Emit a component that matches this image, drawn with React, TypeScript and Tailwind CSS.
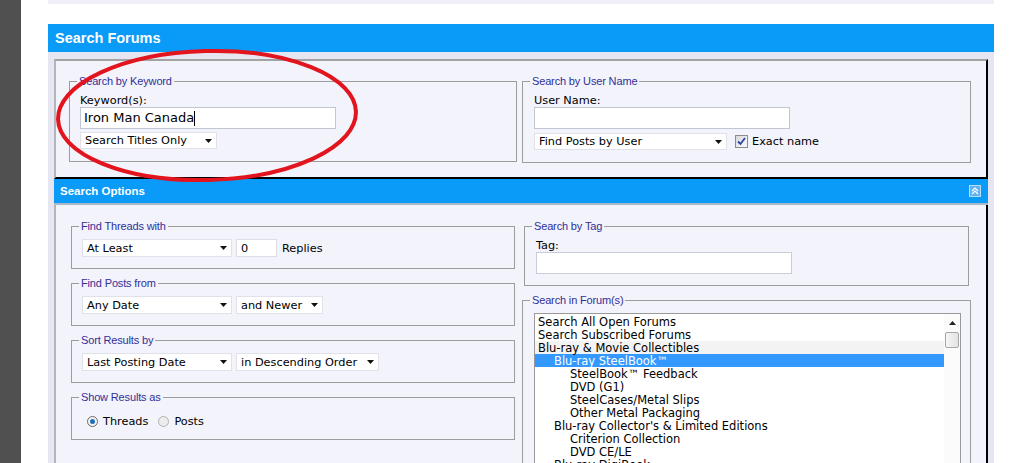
import React from "react";

const Arrow = () => (
  <svg width="7" height="4" viewBox="0 0 7 4" className="shrink-0">
    <path d="M0 0H7L3.5 4Z" fill="#111" />
  </svg>
);

function Select({ label, className }: { label: string; className: string }) {
  return (
    <div
      className={`flex items-center justify-between bg-white border border-[#e1e1ea] pl-[4px] pr-[4px] ${className}`}
    >
      <span className="whitespace-nowrap pt-[1px]">{label}</span>
      <Arrow />
    </div>
  );
}

function Fieldset({
  legend,
  className,
  children,
}: {
  legend: string;
  className: string;
  children: React.ReactNode;
}) {
  return (
    <fieldset className={`border border-[#9c9c9c] min-w-0 p-0 m-0 ${className}`}>
      <legend className="ml-[7px] px-[2px] text-[11px] leading-[14px] tracking-[-0.15px] text-[#30309a] font-['Liberation_Sans',Arial,sans-serif]">
        {legend}
      </legend>
      {children}
    </fieldset>
  );
}

const Radio = ({ checked }: { checked: boolean }) =>
  checked ? (
    <span className="w-[11px] h-[11px] rounded-full border border-[#6a6a6a] bg-[#f4f4f4] flex items-center justify-center shrink-0">
      <span className="w-[5px] h-[5px] rounded-full bg-[#1f6fb8]" />
    </span>
  ) : (
    <span className="w-[11px] h-[11px] rounded-full border border-[#b2b2b2] bg-[#ececec] shrink-0" />
  );

const forums: { t: string; l: number; sel?: boolean; grey?: boolean }[] = [
  { t: "Search All Open Forums", l: 0 },
  { t: "Search Subscribed Forums", l: 0 },
  { t: "Blu-ray & Movie Collectibles", l: 0, grey: true },
  { t: "Blu-ray SteelBook™", l: 1, sel: true },
  { t: "SteelBook™ Feedback", l: 2 },
  { t: "DVD (G1)", l: 2 },
  { t: "SteelCases/Metal Slips", l: 2 },
  { t: "Other Metal Packaging", l: 2 },
  { t: "Blu-ray Collector's & Limited Editions", l: 1 },
  { t: "Criterion Collection", l: 2 },
  { t: "DVD CE/LE", l: 2 },
  { t: "Blu-ray DigiBook", l: 1 },
  { t: "Blu-ray Digipaks", l: 1 },
];

export default function App() {
  return (
    <div className="relative w-[1030px] h-[463px] overflow-hidden bg-white flex items-start font-['DejaVu_Sans',Verdana,sans-serif] text-[11.3px] leading-[14px] text-black">
      <div className="w-[21px] h-[463px] shrink-0 bg-[#505050]" />
      <div className="ml-[27px] w-[946px] shrink-0">
        <div className="h-[4px] bg-[#efeff7]" />
        <div className="h-[20px]" />
        <div className="h-[28px] bg-[#0a9af7] pl-[7px] flex items-center text-white font-bold text-[14.5px] font-['Liberation_Sans',Arial,sans-serif]">
          Search Forums
        </div>
        <div className="bg-[#e6e6f2] pt-[7px] pl-[6px] pr-[6px]">
          {/* Box 1 */}
          <div className="h-[120px] bg-[#f3f3fb] border-t-2 border-t-[#a2a2a2] border-l-2 border-l-[#b4b4bc] border-r-2 border-r-black border-b-2 border-b-black pt-[13px] pl-[13px] pr-[15px] flex items-start gap-[5px]">
            <Fieldset legend="Search by Keyword" className="w-[448px] h-[88px]">
              <div className="pl-[10px] pt-[6px]">
                <div className="leading-[13px]">Keyword(s):</div>
                <div className="w-[256px] h-[22px] bg-white border border-[#c0c6d2] pl-[3px] flex items-center text-[13px]">
                  <span>Iron Man Canada</span>
                  <span className="w-[1px] h-[15px] bg-black" />
                </div>
                <Select label="Search Titles Only" className="mt-[3px] w-[137px] h-[17px]" />
              </div>
            </Fieldset>
            <Fieldset legend="Search by User Name" className="flex-1 h-[89px]">
              <div className="pl-[11px] pt-[6px]">
                <div className="leading-[13px]">User Name:</div>
                <div className="w-[256px] h-[22px] bg-white border border-[#c0c6d2]" />
                <div className="mt-[4px] flex items-center h-[17px]">
                  <Select label="Find Posts by User" className="w-[193px] h-[17px]" />
                  <span className="ml-[8px] w-[13px] h-[13px] border border-[#8c8c8c] bg-gradient-to-br from-[#d8d8d8] to-[#fafafa] flex items-center justify-center">
                    <svg width="9" height="9" viewBox="0 0 9 9">
                      <path d="M1 4.5L3.5 7L8 1" stroke="#2a45a8" strokeWidth="1.8" fill="none" />
                    </svg>
                  </span>
                  <span className="ml-[4px] pt-[1px]">Exact name</span>
                </div>
              </div>
            </Fieldset>
          </div>

          {/* Box 2 */}
          <div className="h-[24px] bg-[#0a9af7] border-b-2 border-b-[#aab7c6] box-content flex items-center justify-between pl-[6px] pr-[7px]">
            <span className="text-white font-bold text-[11.5px] font-['Liberation_Sans',Arial,sans-serif]">
              Search Options
            </span>
            <span className="w-[12px] h-[12px] bg-[#5fb3f2] border border-[#b9defa] flex items-center justify-center">
              <svg width="10" height="10" viewBox="0 0 10 10">
                <path d="M2 5L5 2L8 5M2 8L5 5L8 8" stroke="#fff" strokeWidth="1.2" fill="none" />
              </svg>
            </span>
          </div>
          <div className="h-[300px] bg-[#f3f3fb] border-l-2 border-l-[#b4b4bc] border-r-2 border-r-black pt-[14px] pl-[15px] pr-[15px] flex items-start gap-[7px]">
            <div className="w-[444px] flex flex-col gap-[7px]">
              <Fieldset legend="Find Threads with" className="h-[50px]">
                <div className="pl-[10px] pt-[6px] flex items-center gap-[4px]">
                  <Select label="At Least" className="w-[150px] h-[18px]" />
                  <div className="w-[41px] h-[18px] bg-white border border-[#dcdde6] pl-[4px] pt-[1px] flex items-center">0</div>
                  <span className="ml-[1px] pt-[1px]">Replies</span>
                </div>
              </Fieldset>
              <Fieldset legend="Find Posts from" className="h-[50px]">
                <div className="pl-[10px] pt-[6px] flex items-center gap-[4px]">
                  <Select label="Any Date" className="w-[150px] h-[18px]" />
                  <Select label="and Newer" className="w-[87px] h-[18px]" />
                </div>
              </Fieldset>
              <Fieldset legend="Sort Results by" className="h-[50px]">
                <div className="pl-[10px] pt-[6px] flex items-center gap-[4px]">
                  <Select label="Last Posting Date" className="w-[150px] h-[18px]" />
                  <Select label="in Descending Order" className="w-[143px] h-[18px]" />
                </div>
              </Fieldset>
              <Fieldset legend="Show Results as" className="h-[50px]">
                <div className="pl-[15px] pt-[9px] flex items-center h-[25px]">
                  <Radio checked />
                  <span className="ml-[5px] pt-[1px]">Threads</span>
                  <span className="ml-[10px]" />
                  <Radio checked={false} />
                  <span className="ml-[5px] pt-[1px]">Posts</span>
                </div>
              </Fieldset>
            </div>
            <div className="flex-1 flex flex-col">
              <Fieldset legend="Search by Tag" className="mx-[2px] h-[67px]">
                <div className="pl-[11px] pt-[7px]">
                  <div className="leading-[12px]">Tag:</div>
                  <div className="w-[256px] h-[22px] bg-white border border-[#c8cdd8]" />
                </div>
              </Fieldset>
              <Fieldset legend="Search in Forum(s)" className="mt-[7px] h-[220px]">
                <div className="pl-[11px] pt-[6px]">
                  <div className="w-[427px] h-[200px] bg-white border border-[#9a9a9a] flex">
                    <div className="flex-1 flex flex-col pt-[1px] text-[11.5px] leading-[13px]">
                      {forums.map((f) => (
                        <div
                          key={f.t}
                          className={`h-[13px] shrink-0 whitespace-nowrap ${
                            f.sel ? "bg-[#3399ff] text-white" : f.grey ? "bg-[#f3f3f3]" : ""
                          } ${f.l === 0 ? "pl-[3px]" : f.l === 1 ? "pl-[19px]" : "pl-[35px]"}`}
                        >
                          <span className="relative top-[1px]">{f.t}</span>
                        </div>
                      ))}
                    </div>
                    <div className="w-[16px] bg-[#fbfbfb] flex flex-col items-center">
                      <svg width="7" height="4" viewBox="0 0 7 4" className="mt-[7px]">
                        <path d="M0 4H7L3.5 0Z" fill="#222" />
                      </svg>
                      <div className="mt-[7px] w-[14px] h-[16px] rounded-[2px] border border-[#a8a8a8] bg-gradient-to-r from-[#f6f6f6] to-[#e2e2e2]" />
                    </div>
                  </div>
                </div>
              </Fieldset>
            </div>
          </div>
        </div>
      </div>

      {/* Red annotation ellipse */}
      <svg
        className="absolute left-0 top-0 pointer-events-none"
        width="1030"
        height="463"
        viewBox="0 0 1030 463"
      >
        <ellipse
          cx="207"
          cy="115.5"
          rx="149"
          ry="64.5"
          fill="none"
          stroke="#e2141d"
          strokeWidth="4"
          transform="rotate(-1.5 207 115.5)"
        />
      </svg>
    </div>
  );
}
